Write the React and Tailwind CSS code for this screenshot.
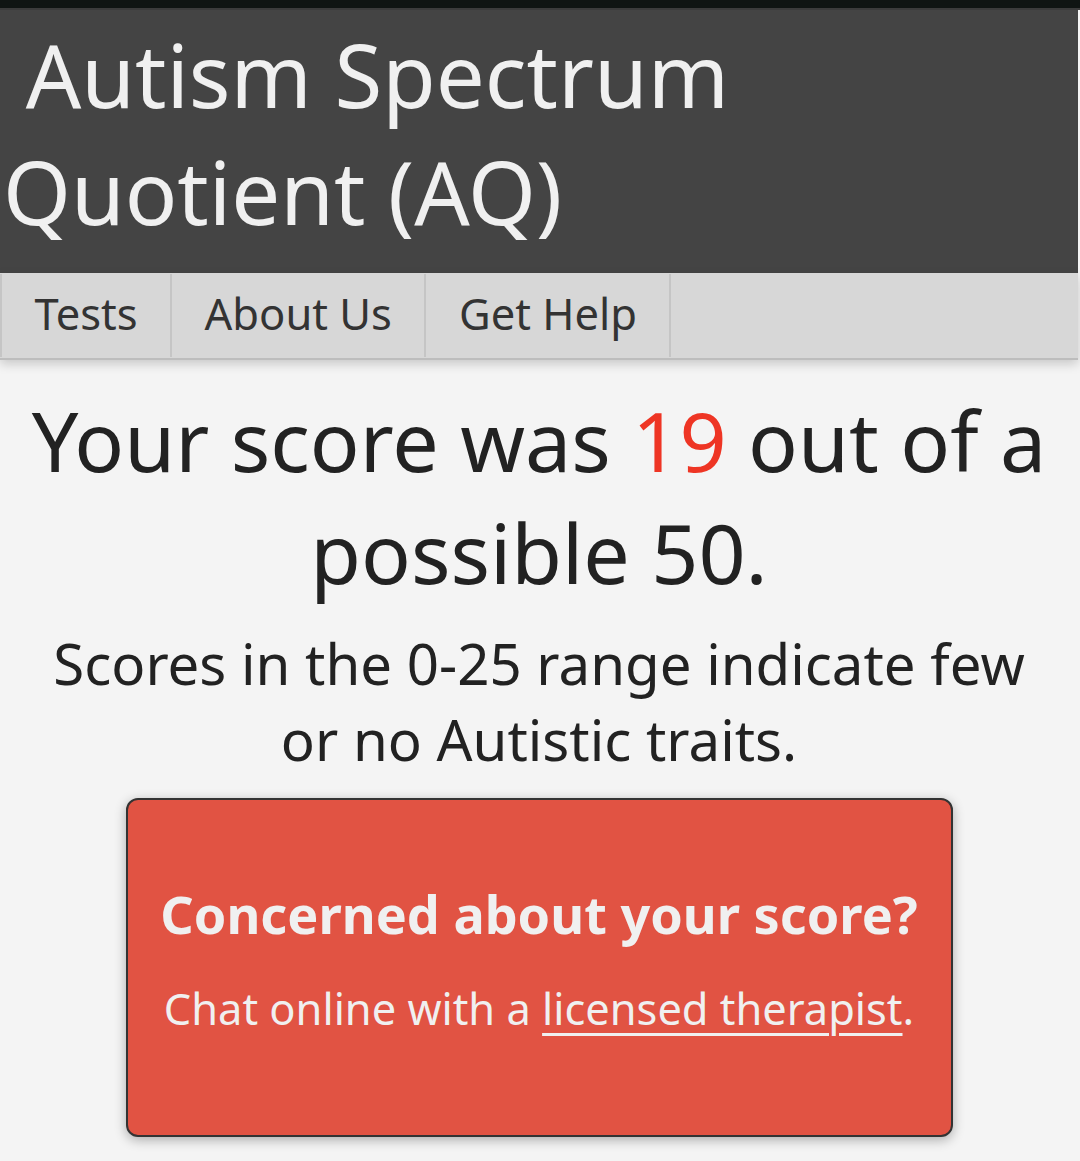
export default function App() {
  return (
    <div className="min-h-[1161px] w-full bg-[#f4f4f4] font-['Noto_Sans',sans-serif]">
      <div className="h-[8px] bg-[#101513]" />
      <div className="h-[2px] bg-[#3c3c3c]" />
      <div className="w-[1078px]">
        <header className="bg-[#444444] pt-[6px] pb-[23px] pl-[3px]">
          <h1 className="text-[87px] leading-[117px] text-[#f0f0f0] font-normal">
            {'\u00a0'}Autism Spectrum Quotient (AQ)
          </h1>
        </header>

        <nav className="flex bg-[#d7d7d7] h-[87px] border-b-[2px] border-[#bdbdbd] shadow-[0_4px_10px_rgba(0,0,0,0.18)]">
          <a className="flex items-center pb-[3px] px-[32.5px] text-[43.5px] text-[#333] border-l-[2px] border-r-[2px] border-[#c5c5c5] my-[1px]">
            Tests
          </a>
          <a className="flex items-center pb-[3px] px-[32.5px] text-[43.5px] text-[#333] border-r-[2px] border-[#c5c5c5] my-[1px]">
            About Us
          </a>
          <a className="flex items-center pb-[3px] px-[32.5px] text-[43.5px] text-[#333] border-r-[2px] border-[#c5c5c5] my-[1px]">
            Get Help
          </a>
        </nav>

        <main className="pt-[24px] text-center text-[#222]">
          <h2 className="text-[82.5px] leading-[112px] font-normal">
            Your score was <span className="text-[#ee3524]">19</span> out of a possible 50.
          </h2>
          <p className="mt-[18px] text-[56.4px] leading-[76px] px-[20px]">
            Scores in the 0-25 range indicate few or no Autistic traits.
          </p>

          <div className="mx-auto mt-[20px] w-[827px] rounded-[12px] border-[2px] border-[#333] bg-[#e15343] pt-[78px] pb-[96px] text-[#f0f0f0] shadow-[0_3px_12px_rgba(0,0,0,0.3)]">
            <h3 className="text-[52.2px] leading-[72px] font-bold">Concerned about your score?</h3>
            <p className="mt-[28px] text-[43.4px] leading-[61px]">
              Chat online with a <a className="underline underline-offset-[8px] decoration-[3px]">licensed therapist</a>.
            </p>
          </div>
        </main>
      </div>
    </div>
  );
}
